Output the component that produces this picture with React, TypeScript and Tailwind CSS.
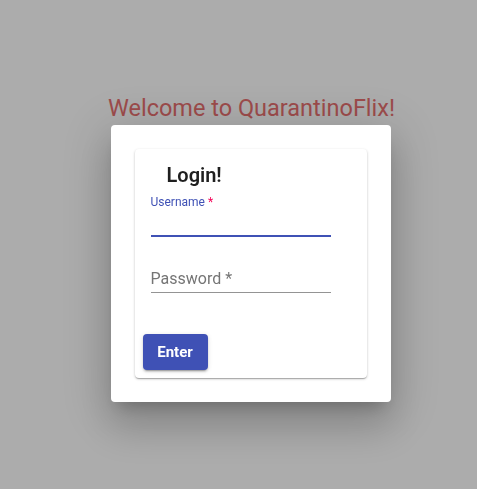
export default function App() {
  return (
    <div className="relative min-h-screen bg-[#acacac] font-['Roboto',sans-serif]">
      <div className="pt-[93px] pl-[26px] text-center">
        <h1 className="text-[23.5px] leading-[30px] text-[#9c4b4b]">Welcome to QuarantinoFlix!</h1>
      </div>

      <div className="fixed inset-0 flex items-start justify-center pl-[24px] pt-[125px]">
        <div className="w-[280px] rounded-[4px] bg-white p-6 shadow-[0_11px_15px_-7px_rgba(0,0,0,0.2),0_24px_38px_3px_rgba(0,0,0,0.14),0_9px_46px_8px_rgba(0,0,0,0.12)]">
          <div className="flex flex-col rounded-[4px] bg-white px-2 pb-2 pt-[14px] shadow-[0_1px_3px_0_rgba(0,0,0,0.2),0_1px_1px_0_rgba(0,0,0,0.14),0_2px_1px_-1px_rgba(0,0,0,0.12)]">
            <h2 className="pl-6 text-[20px] font-semibold leading-[24px] text-[#1f1f1f]">Login!</h2>

            <div className="mt-[7px] w-[180px] self-start ml-2">
              <div className="text-[12px] leading-[16px] text-[#3f51b5]">
                Username <span className="text-[#f50057]">*</span>
              </div>
              <div className="h-[27px] border-b-2 border-[#3f51b5]" />
            </div>

            <div className="ml-2 mt-[32px] w-[180px] self-start border-b border-[#949494] pb-[4px] text-[16px] leading-[19px] text-[#757575]">
              Password *
            </div>

            <button className="mt-[41px] h-9 w-[65px] self-start rounded-[4px] bg-[#3f51b5] text-[15px] font-bold text-white shadow-[0_3px_1px_-2px_rgba(0,0,0,0.2),0_2px_2px_0_rgba(0,0,0,0.14),0_1px_5px_0_rgba(0,0,0,0.12)]">
              Enter
            </button>
          </div>
        </div>
      </div>
    </div>
  );
}
